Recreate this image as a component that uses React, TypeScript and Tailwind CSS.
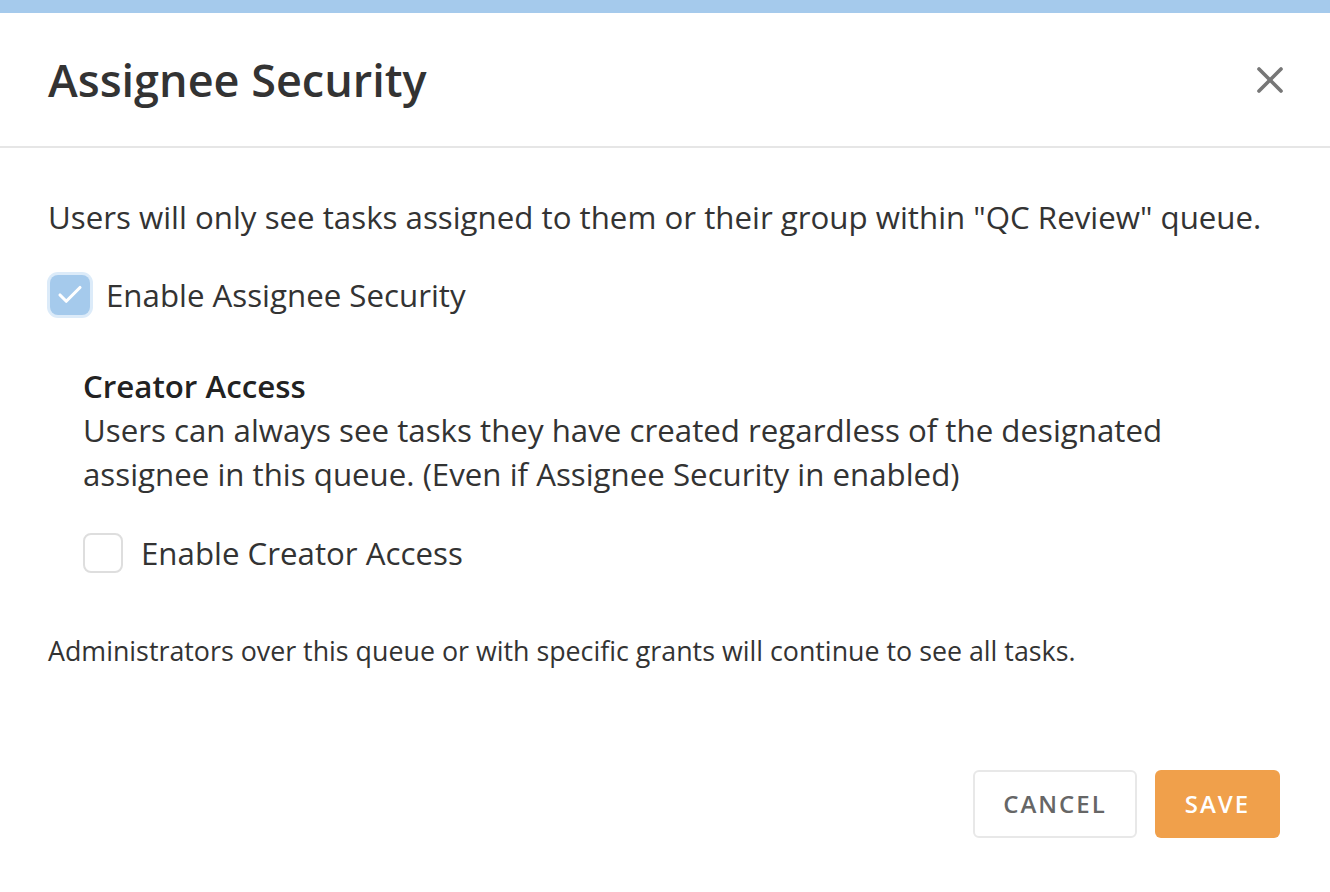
import { X, Check } from 'lucide-react';

export default function App() {
  return (
    <div className="min-h-[892px] w-full bg-white text-[#333] font-['Open_Sans',sans-serif]">
      <div className="h-[13px] bg-[#a5caec]" />

      {/* Header */}
      <div className="flex h-[135px] items-center justify-between border-b-2 border-[#e6e6e6] pl-[48px] pr-[38px]">
        <h1 className="text-[45px] font-semibold leading-none text-[#333]">Assignee Security</h1>
        <button className="text-[#777]" aria-label="Close">
          <X className="h-[44px] w-[44px]" strokeWidth={2} />
        </button>
      </div>

      {/* Body */}
      <div className="px-[48px] pt-[47px]">
        <p className="text-[31.25px] leading-[44px] text-[#333]">
          Users will only see tasks assigned to them or their group within "QC Review" queue.
        </p>

        <label className="mt-[34px] flex h-[44px] items-center gap-[16px]">
          <span className="ml-[2px] flex h-[40px] w-[40px] items-center justify-center rounded-[8px] bg-[#a5caec] ring-[3px] ring-[#dcebf9]">
            <Check className="h-[30px] w-[30px] text-white" strokeWidth={2.5} />
          </span>
          <span className="text-[31.25px] leading-[44px]">Enable Assignee Security</span>
        </label>

        <div className="mt-[47px] pl-[35px]">
          <div className="text-[31.25px] font-semibold leading-[44px] text-[#222]">Creator Access</div>
          <p className="text-[31.25px] leading-[44px]">
            Users can always see tasks they have created regardless of the designated
            <br />
            assignee in this queue. (Even if Assignee Security in enabled)
          </p>

          <label className="mt-[37px] flex items-center gap-[18px]">
            <span className="h-[40px] w-[40px] rounded-[8px] border-2 border-[#dedede] bg-white" />
            <span className="text-[31.25px] leading-[40px]">Enable Creator Access</span>
          </label>
        </div>

        <p className="mt-[60px] text-[26.8px] leading-[36px] text-[#333]">
          Administrators over this queue or with specific grants will continue to see all tasks.
        </p>
      </div>

      {/* Footer */}
      <div className="mt-[101px] flex justify-end gap-[18px] pr-[50px]">
        <button className="h-[68px] w-[164px] rounded-[6px] border-2 border-[#e8e8e8] bg-white text-[24px] font-semibold tracking-[2px] text-[#666]">
          CANCEL
        </button>
        <button className="h-[68px] w-[125px] rounded-[6px] bg-[#f0a04b] text-[24px] font-semibold tracking-[2px] text-white">
          SAVE
        </button>
      </div>
    </div>
  );
}
